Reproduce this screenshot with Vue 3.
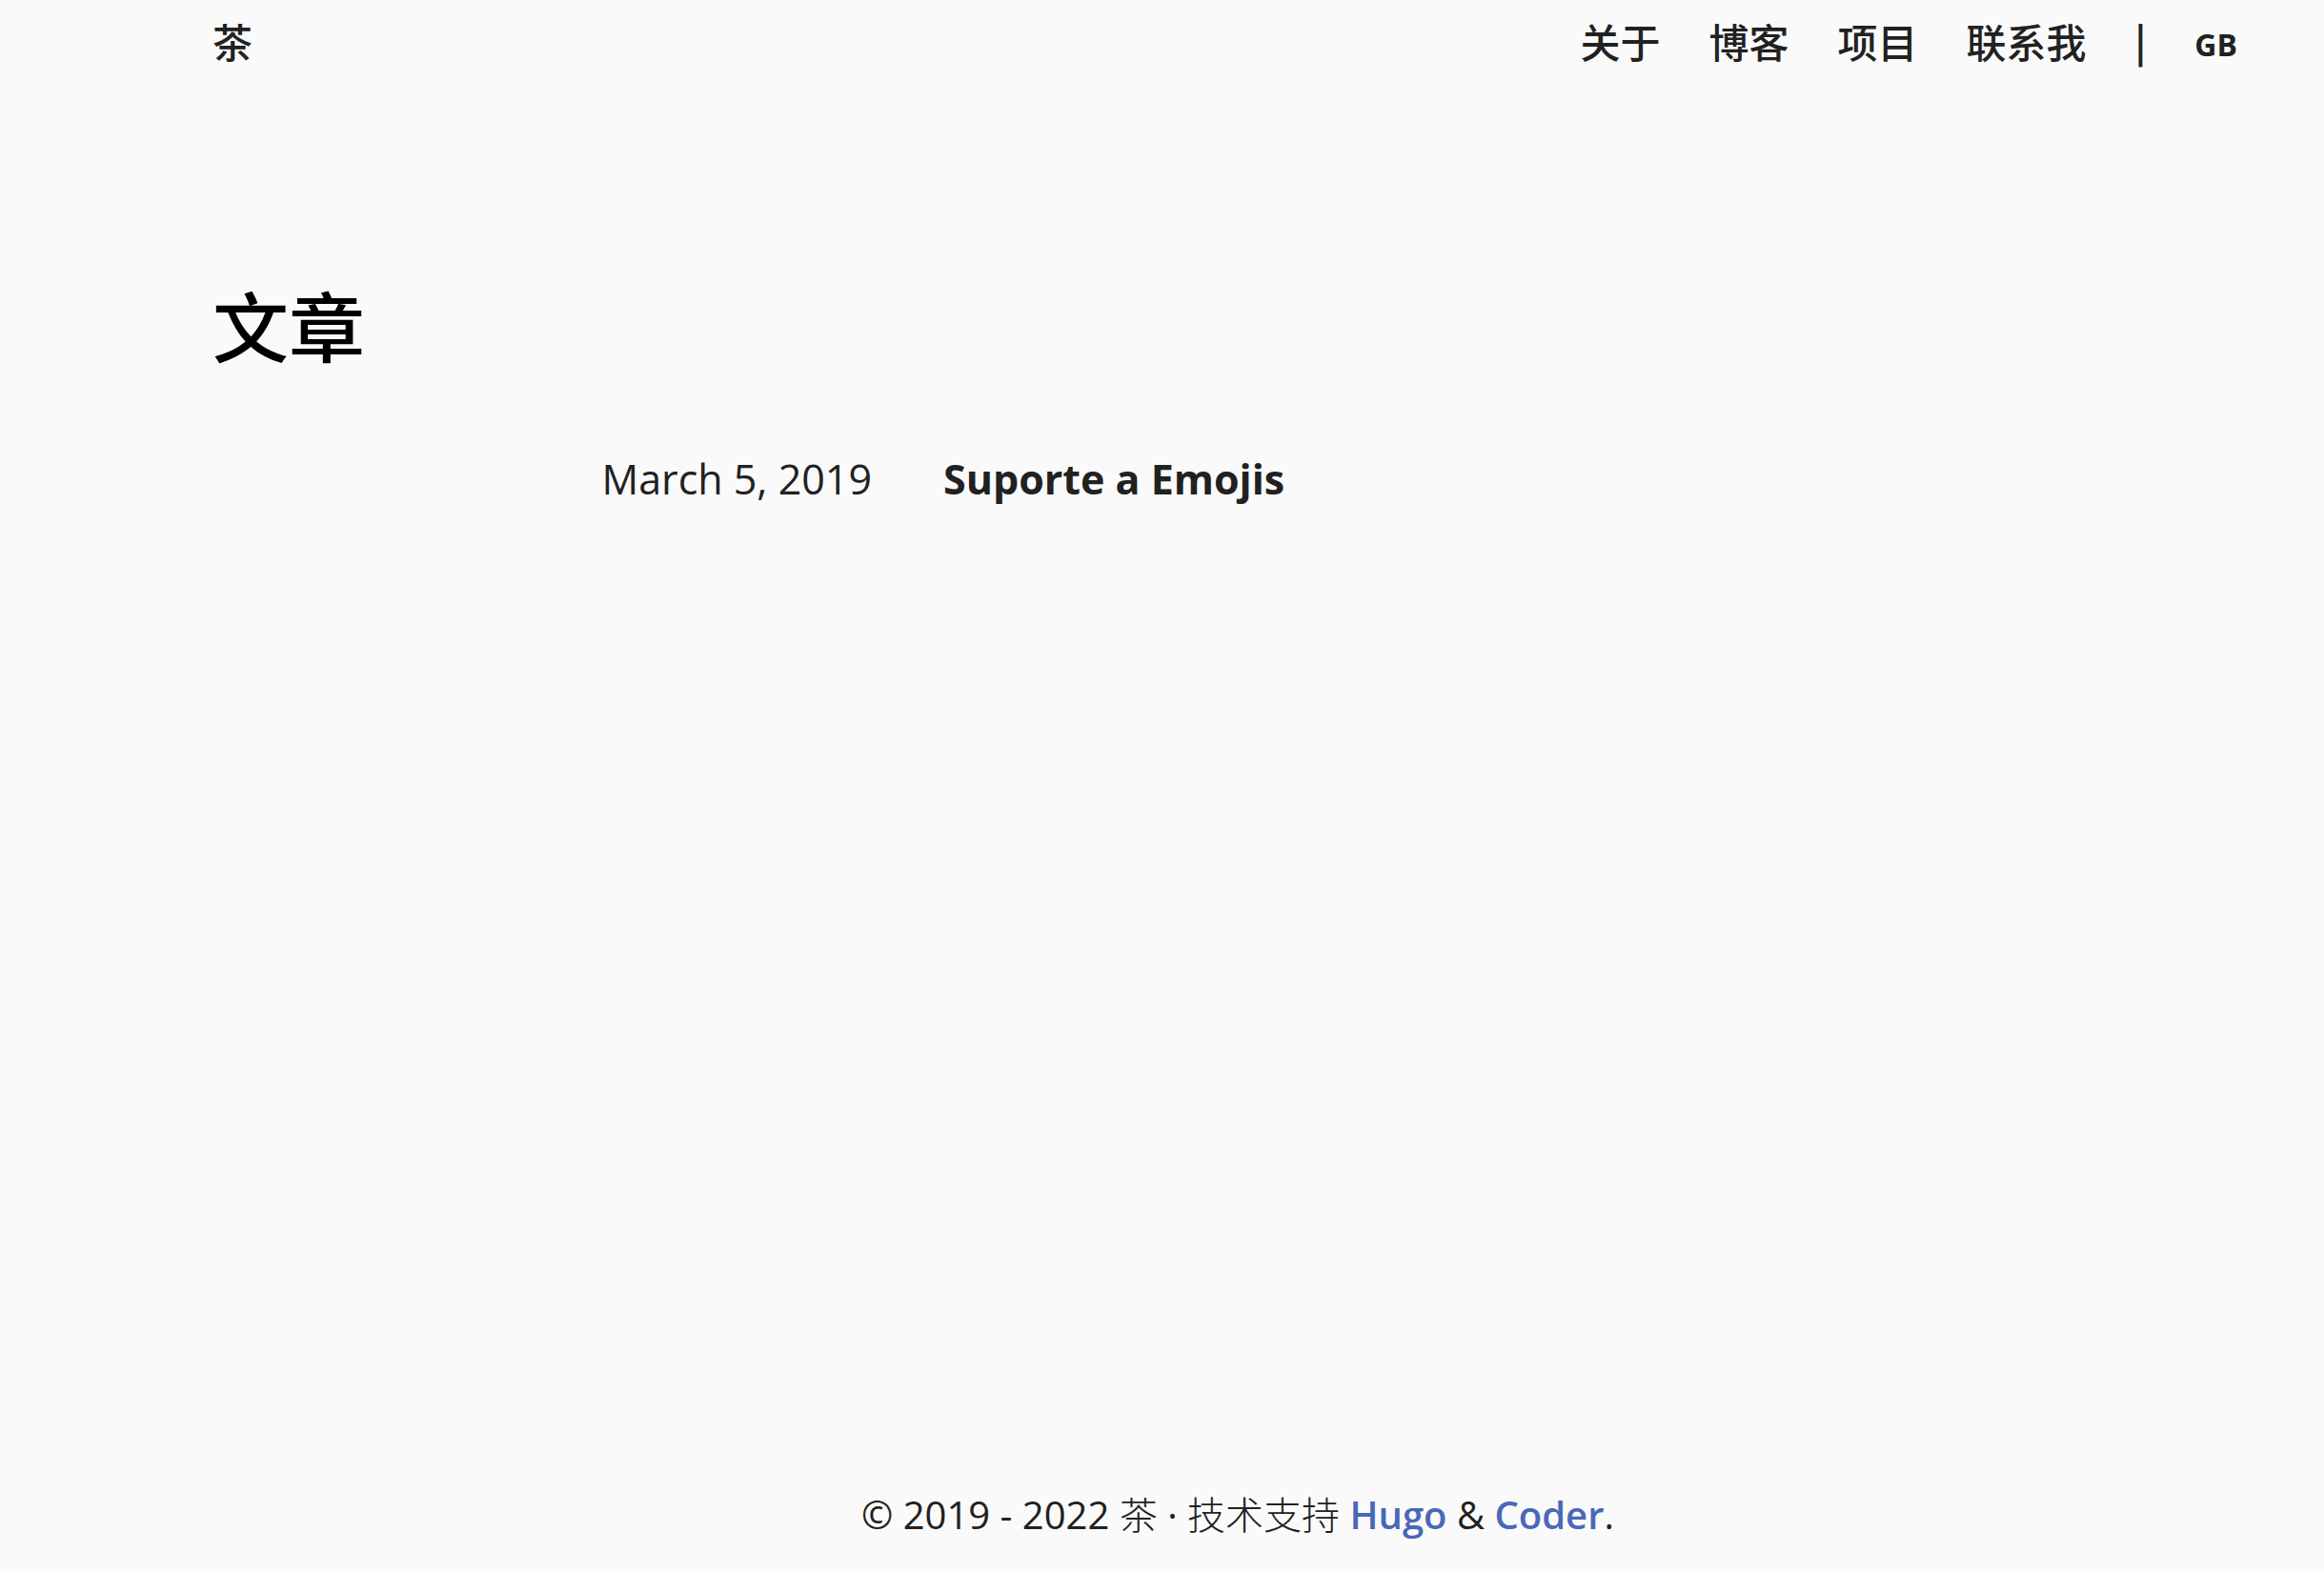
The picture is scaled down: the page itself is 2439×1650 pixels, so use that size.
<script setup>
const links = ['关于', '博客', '项目', '联系我']
const posts = [{ date: 'March 5, 2019', title: 'Suporte a Emojis' }]
</script>

<template>
  <div class="wrapper">
    <nav class="navigation">
      <a class="brand" href="#">茶</a>
      <ul class="menu">
        <li v-for="link in links" :key="link"><a href="#">{{ link }}</a></li>
        <li class="separator">|</li>
        <li class="lang"><a href="#">GB</a></li>
      </ul>
    </nav>
    <main class="content">
      <h1>文章</h1>
      <ul class="posts">
        <li v-for="post in posts" :key="post.title">
          <span class="date">{{ post.date }}</span>
          <a class="title" href="#">{{ post.title }}</a>
        </li>
      </ul>
    </main>
    <footer class="footer">
      © 2019 - 2022 <span class="cjk">茶</span> · <span class="cjk">技术支持</span>{{ ' ' }}<a href="#">Hugo</a> &amp; <a href="#">Coder</a>.
    </footer>
  </div>
</template>

<style>
body {
  background: #fafafa;
}
</style>

<style scoped>
.wrapper {
  box-sizing: border-box;
  min-height: 100vh;
  display: flex;
  flex-direction: column;
  padding: 0 64px 0 223px;
  color: #212121;
  font-family: "Open Sans", "Noto Sans", "Noto Sans CJK SC", sans-serif;
}
a {
  color: inherit;
  text-decoration: none;
}
ul {
  list-style: none;
  margin: 0;
  padding: 0;
}
.navigation {
  display: flex;
  justify-content: space-between;
  align-items: center;
  height: 84px;
  padding-right: 27px;
  font-family: "Noto Sans CJK SC", sans-serif;
  font-size: 42px;
  font-weight: 500;
}
.menu {
  display: flex;
  align-items: center;
  gap: 51px;
}
.separator {
  font-size: 40px;
  font-weight: 700;
}
.lang {
  padding-top: 8px;
  font-family: "Open Sans", sans-serif;
  font-size: 32px;
  font-weight: 700;
}
.content {
  flex: 1;
}
h1 {
  margin: 199px 0 0;
  color: #000;
  font-size: 80px;
  line-height: 120px;
  font-weight: 500;
}
.posts {
  margin-top: 68px;
}
.posts li {
  display: flex;
  align-items: baseline;
  line-height: 64px;
}
.date {
  width: 692px;
  margin-right: 75px;
  text-align: right;
  font-size: 43px;
  font-weight: 400;
}
.title {
  font-size: 43px;
  font-weight: 700;
}
.footer {
  padding-bottom: 32px;
  text-align: center;
  font-size: 40px;
  line-height: 56px;
}
.footer .cjk {
  font-weight: 300;
}
.footer a {
  color: #4868b8;
  font-weight: 600;
}
</style>
